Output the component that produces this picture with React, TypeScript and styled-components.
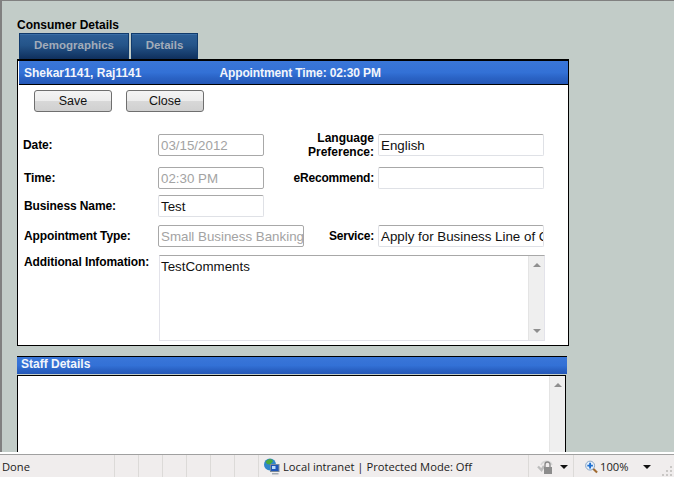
import React from "react";
import styled, { createGlobalStyle } from "styled-components";

const Global = createGlobalStyle`
  html, body { margin: 0; padding: 0; height: 100%; overflow: hidden; background: #c2ccc8; }
  #root { height: 477px; }
`;

const Page = styled.div`
  width: 674px;
  height: 477px;
  display: flex;
  flex-direction: column;
  font-family: "Liberation Sans", Arial, sans-serif;
  overflow: hidden;
`;

const Viewport = styled.div`
  height: 452px;
  flex: none;
  background: #c2ccc8;
  border-top: 1px solid #808080;
  border-left: 2px solid #808080;
  padding: 17px 0 0 15px;
  overflow: hidden;
  box-sizing: border-box;
`;

const PageTitle = styled.div`
  font-size: 12px;
  font-weight: bold;
  color: #000;
  line-height: 14px;
  height: 15px;
`;

const Tabs = styled.div`
  display: flex;
  gap: 2px;
  padding-left: 2px;
  height: 26px;
`;

const Tab = styled.div<{ $w: number }>`
  width: ${(p) => p.$w}px;
  box-sizing: border-box;
  border: 1px solid #103a6c;
  border-bottom: none;
  box-shadow: inset 0 1px 0 #3a6ea6;
  background: linear-gradient(#2d5f97 0%, #245489 45%, #0f2f5c 100%);
  color: #a2acb9;
  font-size: 11.5px;
  font-weight: bold;
  line-height: 23px;
  text-align: center;
`;

const Panel = styled.div`
  width: 552px;
  height: 287px;
  box-sizing: border-box;
  border: 1px solid #000;
  border-top-width: 2px;
  background: #fff;
`;

const blueBar = `
  background: linear-gradient(#3a76d8 0%, #3371d6 50%, #2a62c4 75%, #2458b8 100%);
  color: #f2f5fb;
  font-size: 12px;
  font-weight: bold;
`;

const PanelHeader = styled.div`
  ${blueBar}
  height: 23px;
  margin-left: 1px;
  border-bottom: 1px solid #000;
  display: flex;
  align-items: center;
  padding-left: 5px;
  gap: 78px;
`;

const HeaderTime = styled.span`
  letter-spacing: -0.12px;
`;

const Toolbar = styled.div`
  display: flex;
  gap: 14px;
  padding: 5px 0 0 16px;
  height: 44px;
  box-sizing: border-box;
`;

const Button = styled.button`
  width: 78px;
  height: 22px;
  padding: 0;
  box-sizing: border-box;
  border: 1px solid #6f6f6f;
  border-radius: 3px;
  background: linear-gradient(#f4f4f4 0%, #ececec 50%, #d8d8d8 52%, #d0d0d0 100%);
  color: #111;
  font-family: inherit;
  font-size: 12.5px;
`;

const Form = styled.div`
  display: flex;
  flex-direction: column;
  padding: 5px 0 0 5px;
`;

const Row = styled.div<{ $h: number; $mb: number }>`
  display: flex;
  height: ${(p) => p.$h}px;
  margin-bottom: ${(p) => p.$mb}px;
`;

const Left = styled.div<{ $lh?: number; $pl?: number }>`
  width: 135px;
  flex: none;
  box-sizing: border-box;
  padding-left: ${(p) => p.$pl ?? 1}px;
  font-size: 12px;
  letter-spacing: -0.1px;
  font-weight: bold;
  color: #000;
  line-height: ${(p) => p.$lh ?? 22}px;
`;

const Right = styled.div<{ $w: number; $tight?: boolean }>`
  width: ${(p) => p.$w}px;
  flex: none;
  font-size: 12px;
  letter-spacing: ${(p) => (p.$tight ? "-0.2px" : "0")};
  font-weight: bold;
  color: #000;
  text-align: right;
  line-height: 14px;
  display: flex;
  align-items: center;
  justify-content: flex-end;
  padding-right: 4px;
  box-sizing: border-box;
`;

const Field = styled.div<{ $w: number; $off?: boolean }>`
  width: ${(p) => p.$w}px;
  height: 22px;
  flex: none;
  box-sizing: border-box;
  border: 1px solid ${(p) => (p.$off ? "#a8a8a8" : "#dfe1e6")};
  border-top-color: #a8a8a8;
  border-radius: 2px;
  background: #fff;
  color: ${(p) => (p.$off ? "#a3a3a3" : "#111")};
  font-size: 13.33px;
  line-height: 22px;
  padding-left: 2px;
  white-space: nowrap;
  overflow: hidden;
`;

const TextArea = styled.div`
  width: 386px;
  height: 86px;
  margin-left: 1px;
  box-sizing: border-box;
  border: 1px solid #e3e3ea;
  border-top-color: #a8a8a8;
  display: flex;
  color: #111;
  font-size: 13.33px;
`;

const AreaText = styled.div`
  flex: 1;
  padding: 2px 0 0 1px;
  line-height: 18px;
`;

const Scrollbar = styled.div`
  width: 16px;
  flex: none;
  background: #efefef;
  border-left: 1px solid #e4e4e4;
  box-sizing: border-box;
  display: flex;
  flex-direction: column;
  align-items: center;
  justify-content: space-between;
  padding: 7px 0 7px;
`;

const Arrow = styled.div<{ $down?: boolean }>`
  width: 0;
  height: 0;
  border-left: 4px solid transparent;
  border-right: 4px solid transparent;
  ${(p) => (p.$down ? "border-top: 4px solid #8f8f8f;" : "border-bottom: 4px solid #8f8f8f;")}
`;

const StaffHeader = styled.div`
  ${blueBar}
  width: 550px;
  height: 18px;
  margin-top: 10px;
  border-top: 1px solid #000;
  padding: 0 0 3px 4px;
  box-sizing: border-box;
  display: flex;
  align-items: center;
`;

const StaffBox = styled.div`
  width: 549px;
  height: 80px;
  margin-top: 1px;
  box-sizing: border-box;
  border: 1px solid #000;
  border-bottom: none;
  background: #fff;
  display: flex;
  justify-content: flex-end;
`;

const StatusBar = styled.div`
  flex: 1;
  border-top: 2px solid #fff;
  display: flex;
  flex-direction: column;
`;

const StatusInner = styled.div`
  flex: 1;
  border-top: 1px solid #a0a0a0;
  background: #f0eded;
  display: flex;
  align-items: stretch;
  font-family: "Open Sans", "Noto Sans", sans-serif;
  font-size: 11.2px;
  color: #1c1c1c;
  position: relative;
`;

const Cell = styled.div<{ $w: number; $pl?: number; $bare?: boolean; $gap?: number }>`
  width: ${(p) => p.$w}px;
  flex: none;
  box-sizing: border-box;
  border-right: ${(p) => (p.$bare ? "none" : "1px solid #dcdad8")};
  padding: 1px 0 0 ${(p) => p.$pl ?? 0}px;
  display: flex;
  align-items: center;
  gap: ${(p) => p.$gap ?? 3}px;
  white-space: nowrap;
  overflow: hidden;
`;

const Caret = styled.span<{ $ml: number }>`
  width: 0;
  height: 0;
  margin-left: ${(p) => p.$ml}px;
  border-left: 4px solid transparent;
  border-right: 4px solid transparent;
  border-top: 4px solid #111;
`;

const Grip = styled.svg`
  position: absolute;
  right: 1px;
  bottom: 1px;
`;

const Globe = () => (
  <svg width="17" height="17" viewBox="0 0 17 17">
    <circle cx="7" cy="6.5" r="6" fill="#2f86c9" />
    <path d="M2.5 3.5 6 1l3 .5 1 2-3 3-3-.5zM8 9l2-1 1 3-3 1.5z" fill="#4aa83c" />
    <rect x="7.5" y="6.5" width="8.5" height="7" fill="#1f55b8" stroke="#7c8a98" />
    <rect x="9" y="8" width="3.5" height="3" fill="#bcdcfa" />
    <rect x="9" y="15" width="6.5" height="1.5" fill="#a4acb4" />
  </svg>
);

const LockIcon = () => (
  <svg width="17" height="17" viewBox="0 0 17 17">
    <path d="M1 8.5 4.5 12 7 8" fill="none" stroke="#bdbdbd" strokeWidth="2.4" />
    <path d="M4 7a6 6 0 0 1 11 0" fill="none" stroke="#d6d6d6" strokeWidth="1.6" />
    <path d="M8 9V6.5a2.5 2.5 0 0 1 5 0V9" fill="none" stroke="#8a8a8a" strokeWidth="1.4" />
    <rect x="7" y="9" width="8" height="7" fill="#8c8c8c" />
  </svg>
);

const ZoomIcon = () => (
  <svg width="13" height="14" viewBox="0 0 14 14">
    <line x1="8" y1="8" x2="13" y2="13" stroke="#a06a30" strokeWidth="2.2" />
    <circle cx="5.5" cy="5.5" r="4.8" fill="#e8f1fb" stroke="#7f9fc0" />
    <path d="M5.5 2.5v6M2.5 5.5h6" stroke="#1d6fd0" strokeWidth="2" />
  </svg>
);

export default function App() {
  return (
    <Page>
      <Global />
      <Viewport>
        <PageTitle>Consumer Details</PageTitle>
        <Tabs>
          <Tab $w={110}>Demographics</Tab>
          <Tab $w={67}>Details</Tab>
        </Tabs>
        <Panel>
          <PanelHeader>
            <span>Shekar1141, Raj1141</span>
            <HeaderTime>Appointment Time: 02:30 PM</HeaderTime>
          </PanelHeader>
          <Toolbar>
            <Button>Save</Button>
            <Button>Close</Button>
          </Toolbar>
          <Form>
            <Row $h={22} $mb={11}>
              <Left $pl={0}>Date:</Left>
              <Field $w={106} $off>03/15/2012</Field>
              <Right $w={114}>Language<br />Preference:</Right>
              <Field $w={166}>English</Field>
            </Row>
            <Row $h={22} $mb={6}>
              <Left>Time:</Left>
              <Field $w={106} $off>02:30 PM</Field>
              <Right $w={114} $tight>eRecommend:</Right>
              <Field $w={166} />
            </Row>
            <Row $h={22} $mb={8}>
              <Left>Business Name:</Left>
              <Field $w={106}>Test</Field>
            </Row>
            <Row $h={22} $mb={8}>
              <Left>Appointment Type:</Left>
              <Field $w={146} $off>Small Business Banking</Field>
              <Right $w={74} $tight>Service:</Right>
              <Field $w={166}>Apply for Business Line of Credit</Field>
            </Row>
            <Row $h={86} $mb={0}>
              <Left $lh={14}>Additional Infomation:</Left>
              <TextArea>
                <AreaText>TestComments</AreaText>
                <Scrollbar>
                  <Arrow />
                  <Arrow $down />
                </Scrollbar>
              </TextArea>
            </Row>
          </Form>
        </Panel>
        <StaffHeader>Staff Details</StaffHeader>
        <StaffBox>
          <Scrollbar>
            <Arrow />
          </Scrollbar>
        </StaffBox>
      </Viewport>
      <StatusBar>
        <StatusInner>
          <Cell $w={115} $pl={2}>Done</Cell>
          <Cell $w={24} />
          <Cell $w={24} />
          <Cell $w={24} />
          <Cell $w={24} />
          <Cell $w={24} />
          <Cell $w={24} />
          <Cell $w={270} $pl={4}>
            <Globe />
            Local intranet | Protected Mode: Off
          </Cell>
          <Cell $w={45} $pl={8}>
            <LockIcon />
            <Caret $ml={3} />
          </Cell>
          <Cell $w={100} $pl={11} $bare $gap={2}>
            <ZoomIcon />
            100%
            <Caret $ml={13} />
          </Cell>
          <Grip width="12" height="12" viewBox="0 0 12 12">
            <path d="M9 2h2v2H9zM5 6h2v2H5zM9 6h2v2H9zM1 10h2v2H1zM5 10h2v2H5zM9 10h2v2H9z" fill="#c9c7c5" />
          </Grip>
        </StatusInner>
      </StatusBar>
    </Page>
  );
}
